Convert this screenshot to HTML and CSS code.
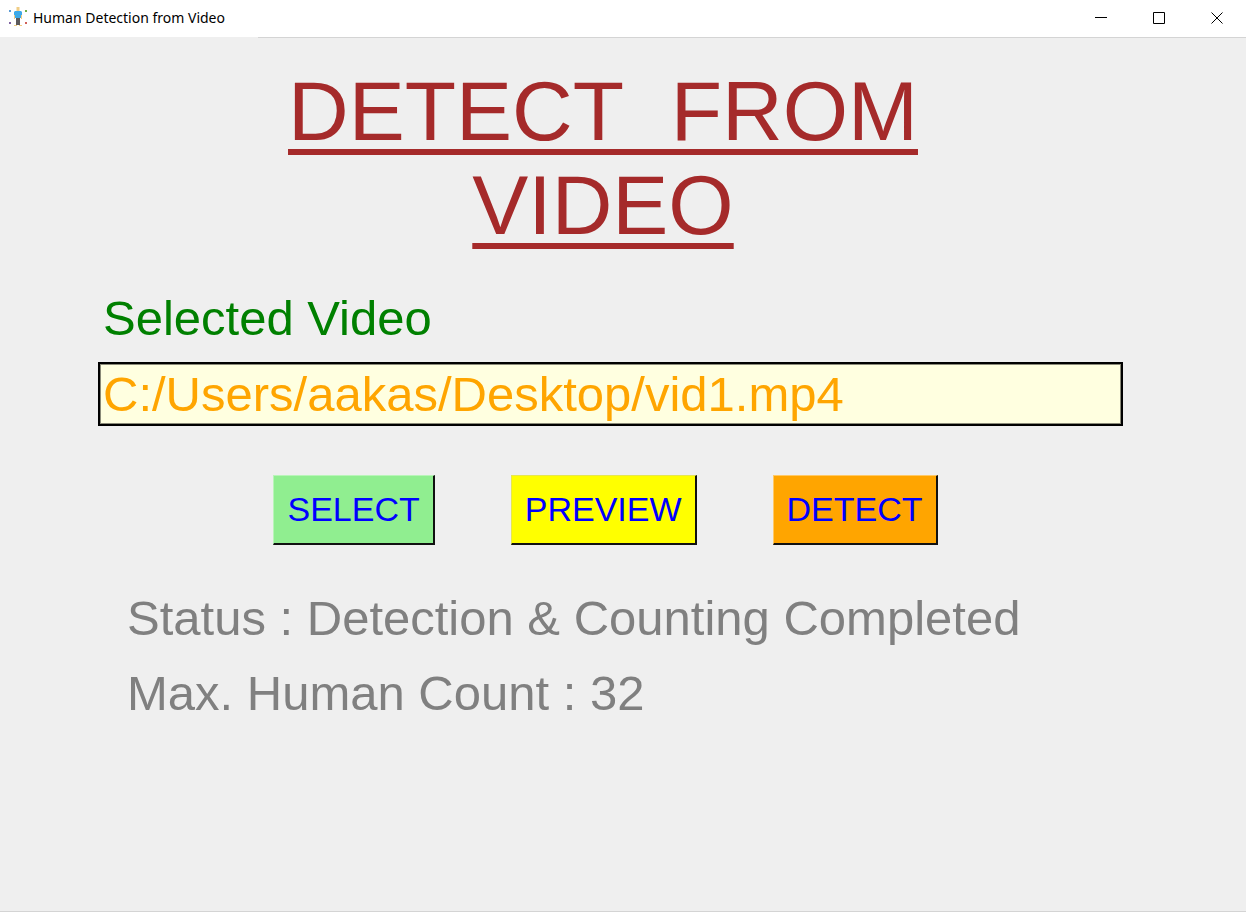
FILE: index.html
```html
<!DOCTYPE html>
<html lang="en">
<head>
<meta charset="utf-8">
<title>Human Detection from Video</title>
<link rel="stylesheet" href="styles.css">
</head>
<body>
<div class="window">
  <header class="titlebar">
    <svg class="app-icon" viewBox="0 0 20 20" aria-hidden="true">
      <path fill="#5b9bd5" d="M1 2h2v2H1z"/>
      <path fill="#70ad47" d="M17 2h2v2h-2z"/>
      <path fill="#8064a2" d="M1 14h2v2H1z"/>
      <path fill="#d06058" d="M17 14h2v2h-2z"/>
      <path fill="#f0cd86" d="M8.500-1h3v4h-3zM6 6h1v5H6zM13 6h1v5h-1zM6 17h3v1H6zM11 17h3v1h-3z"/>
      <path fill="#3da9e8" d="M7 3h6l1 1v3h-1v3H7V7H6V4z"/>
      <path fill="#5c5a5c" d="M8 10h4v7H8z"/>
    </svg>
    <span class="window-title">Human Detection from Video</span>
    <div class="window-controls">
      <button class="window-button" type="button" aria-label="Minimize"><svg viewBox="0 0 14 14"><path d="M1 6.500h12"/></svg></button>
      <button class="window-button" type="button" aria-label="Maximize"><svg viewBox="0 0 14 14"><path d="M1.500 1.500h11v11h-11z"/></svg></button>
      <button class="window-button" type="button" aria-label="Close"><svg viewBox="0 0 14 14"><path d="M1.500 1.500l11 11M12.500 1.500l-11 11"/></svg></button>
    </div>
  </header>
  <main class="content">
    <h1 class="heading">DETECT&nbsp; FROM<br>VIDEO</h1>
    <div class="field">
      <label class="field-label" for="path">Selected Video</label>
      <input class="field-input" id="path" type="text" value="C:/Users/aakas/Desktop/vid1.mp4" spellcheck="false">
    </div>
    <div class="actions">
      <button class="action select" type="button">SELECT</button>
      <button class="action preview" type="button">PREVIEW</button>
      <button class="action detect" type="button">DETECT</button>
    </div>
    <div class="status" role="status">
      <p>Status : Detection &amp; Counting Completed</p>
      <p>Max. Human Count : 32</p>
    </div>
  </main>
</div>
</body>
</html>
```
FILE: styles.css
```css
* {
  box-sizing: border-box;
}

body {
  margin: 0;
  background: #efefef;
  font-family: "Liberation Sans", Arial, sans-serif;
}

.window {
  display: flex;
  flex-direction: column;
  min-height: 100vh;
  border-bottom: 1px solid #d4d4d4;
}

.titlebar {
  display: flex;
  align-items: center;
  height: 38px;
  padding-left: 8px;
  padding-bottom: 2px;
  background: linear-gradient(to right, #efefef 258px, #d4d4d4 258px) bottom / 100% 1px no-repeat #fff;
}

.app-icon {
  width: 20px;
  height: 20px;
  margin-right: 5px;
  overflow: visible;
}

.window-title {
  font: 14px/20px "Noto Sans", sans-serif;
  color: #000;
}

.window-controls {
  display: flex;
  align-self: stretch;
  margin-left: auto;
}

.window-button {
  display: flex;
  align-items: center;
  justify-content: center;
  width: 58px;
  padding: 0;
  border: 0;
  background: none;
}

.window-button svg {
  width: 14px;
  height: 14px;
  fill: none;
  stroke: #000;
}

.content {
  flex: 1;
  padding-top: 26px;
}

.heading {
  margin: 0 40px 38px 0;
  color: brown;
  font-size: 84px;
  font-weight: 400;
  line-height: 94px;
  text-align: center;
  text-decoration: underline;
  text-decoration-thickness: 6px;
  text-decoration-skip-ink: none;
  text-underline-offset: 9px;
}

.field {
  display: flex;
  flex-direction: column;
  gap: 16px;
  margin: 0 123px 49px 98px;
}

.field-label {
  padding-left: 5px;
  color: green;
  font-size: 49px;
  line-height: 56px;
}

.field-input {
  width: 100%;
  height: 64px;
  padding: 0 3px;
  border: 2px solid #000;
  border-radius: 0;
  box-shadow: inset 0 0 0 1px #8a8a78;
  background: lightyellow;
  color: orange;
  font: 49px/56px "Liberation Sans", Arial, sans-serif;
}

.actions {
  display: flex;
  justify-content: center;
  gap: 76px;
  margin: 0 35px 36px 0;
}

.action {
  height: 70px;
  padding: 0 13px 2px;
  border: 2px solid;
  border-width: 1px 2px 2px 1px;
  color: blue;
  font: 34px/40px "Liberation Sans", Arial, sans-serif;
}

.select {
  border-color: #b9f5b9 #111 #111 #b9f5b9;
  background: lightgreen;
}

.preview {
  border-color: #e6e650 #111 #111 #e6e650;
  background: yellow;
}

.detect {
  border-color: #ffc966 #111 #111 #ffc966;
  background: orange;
}

.status {
  padding-left: 127px;
  color: gray;
  font-size: 49px;
  line-height: 75px;
}

.status p {
  margin: 0;
}
```
